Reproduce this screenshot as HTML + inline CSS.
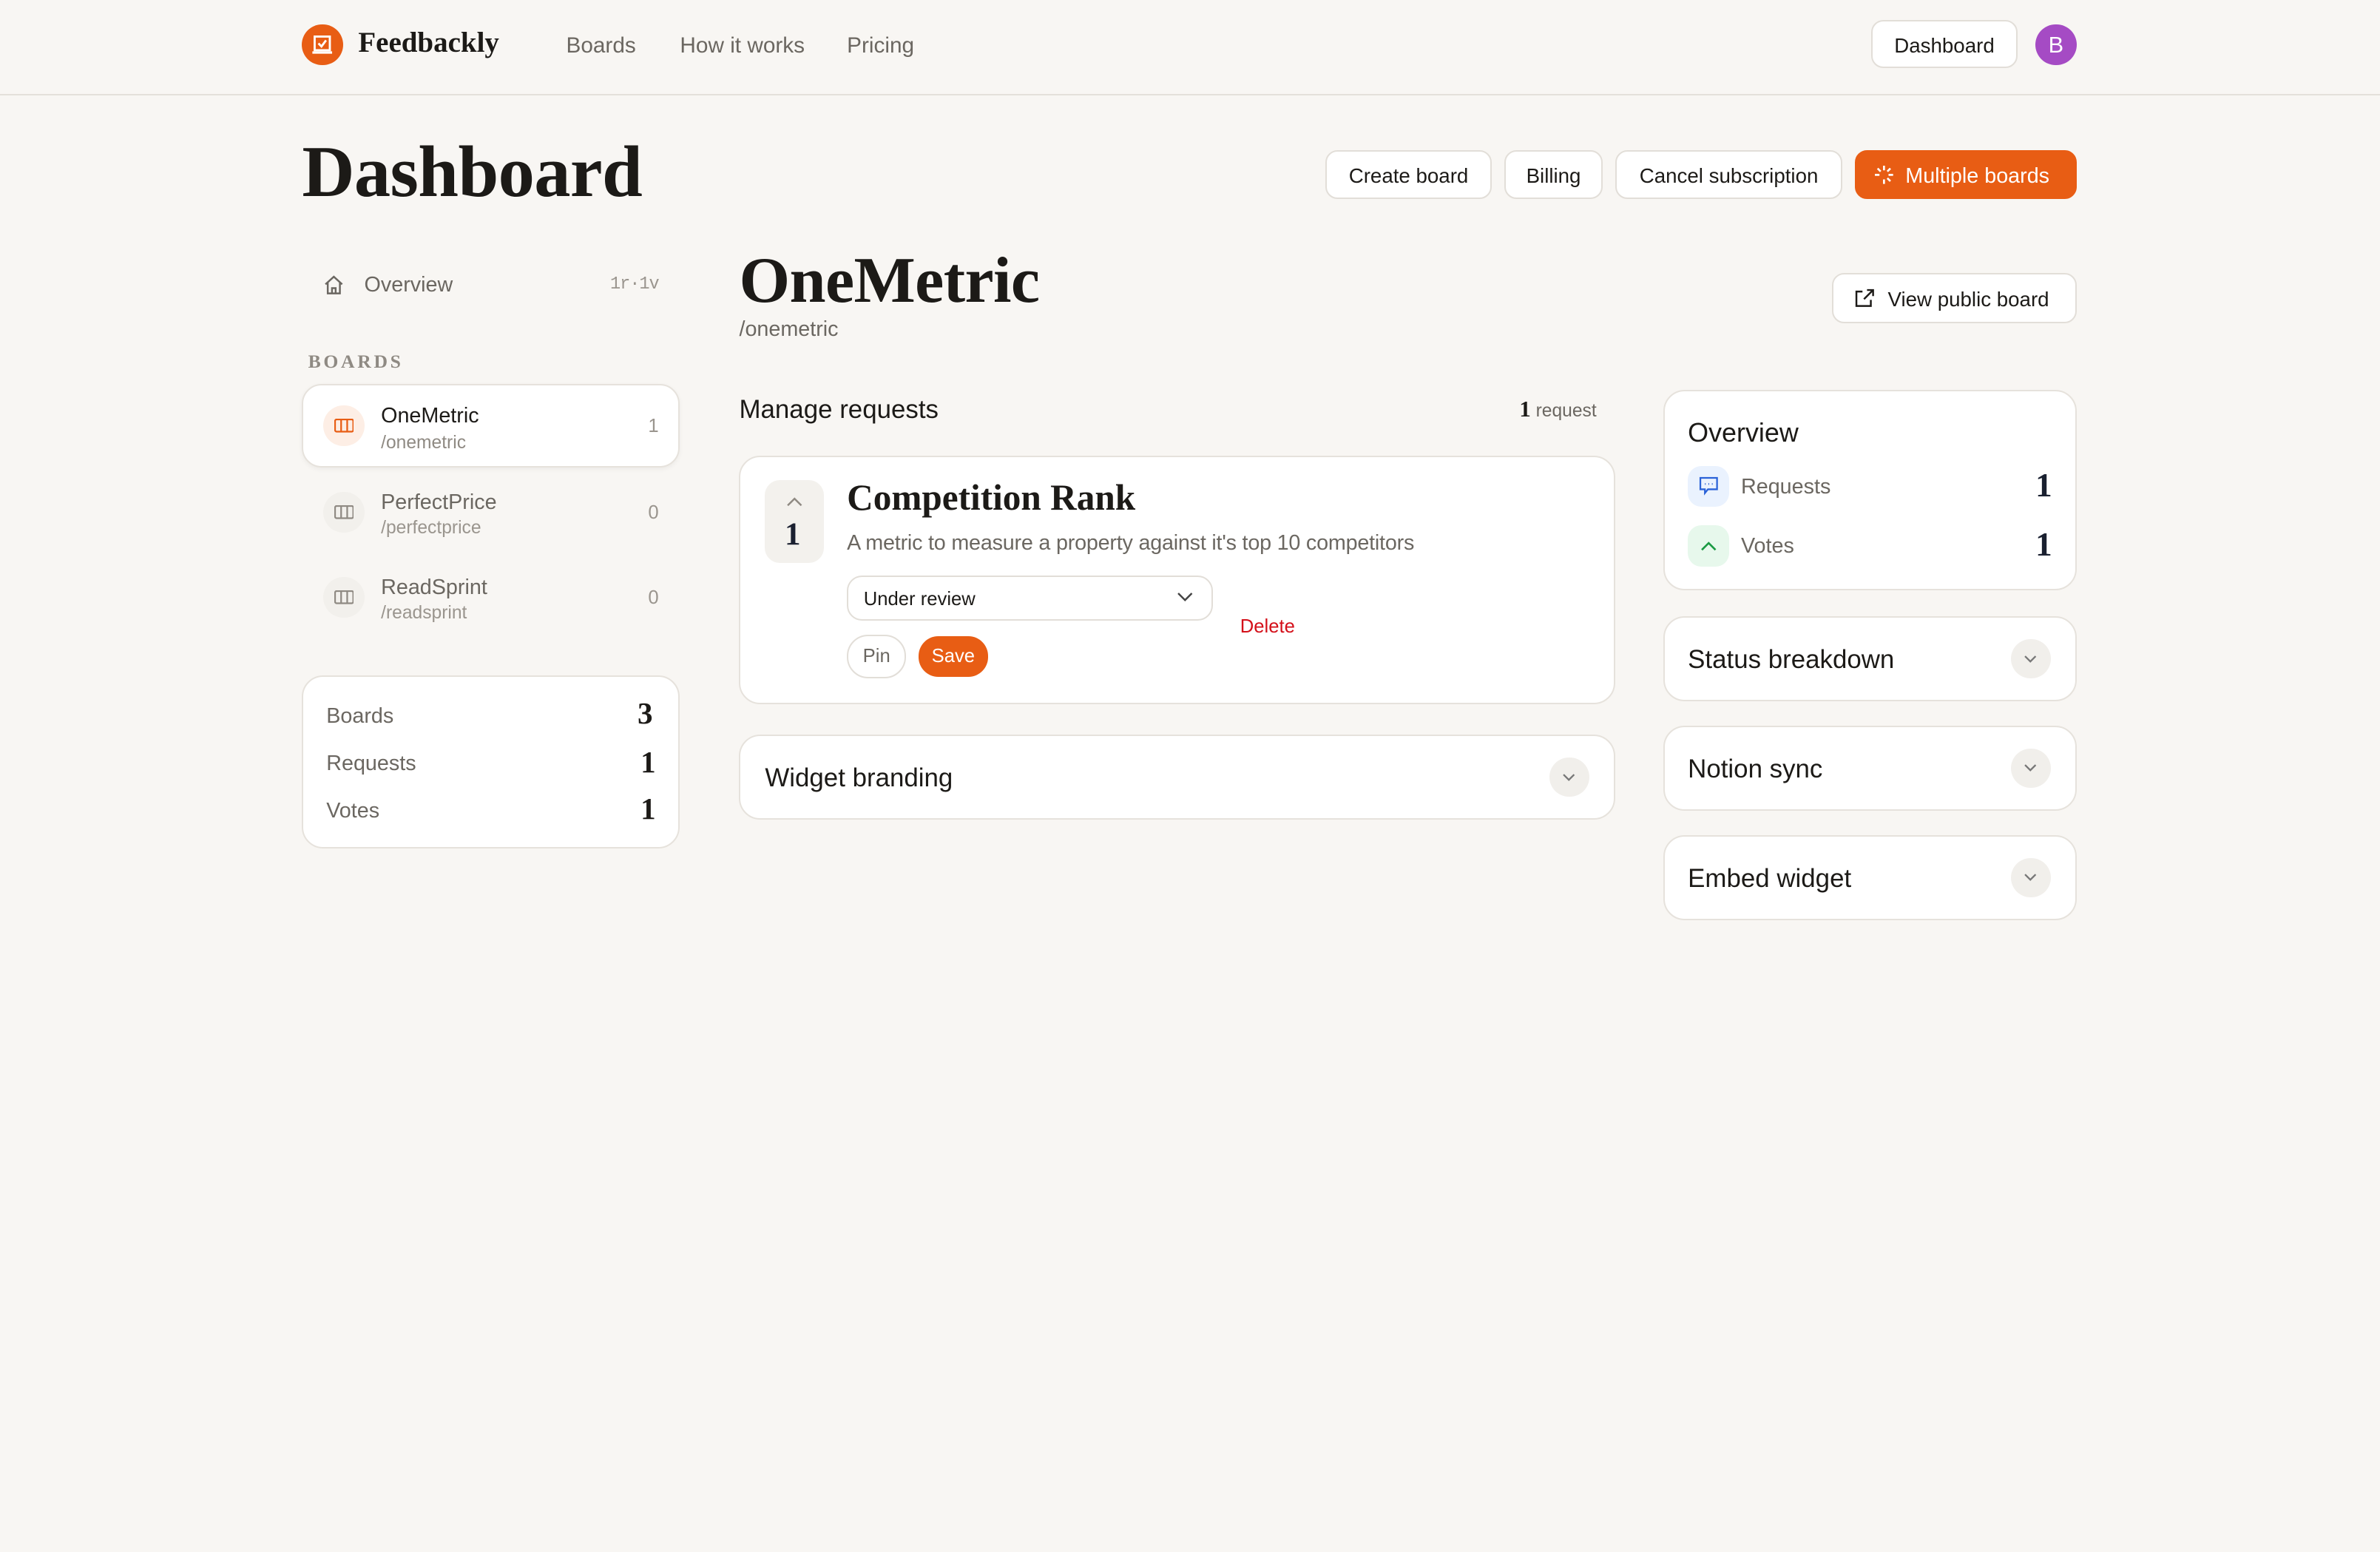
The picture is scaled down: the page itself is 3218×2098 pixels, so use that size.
<!DOCTYPE html>
<html><head><meta charset="utf-8"><style>
html,body{margin:0;padding:0;background:#f8f6f3;width:3218px;height:2098px;overflow:hidden}
#w{zoom:2.05230;width:1568px;height:1022px;position:relative;font-family:"Liberation Sans",sans-serif;color:#1c1a17}
.a{position:absolute}
.serif{font-family:"Liberation Serif",serif;font-weight:bold}
.card{position:absolute;background:#fff;border:1px solid #e6e2dc;border-radius:14px;box-sizing:border-box}
.btn{position:absolute;background:#fff;border:1px solid #e2ded8;border-radius:8px;box-sizing:border-box;font-size:13.5px;text-align:center;line-height:30px;color:#1c1a17}
.chev{position:absolute;width:26px;height:26px;border-radius:50%;background:#f1efeb}
.g{color:#6b6761}
</style></head><body><div id="w">
<div class="a" style="left:0;top:62px;width:1568px;height:1px;background:#e4e0da"></div>
<div class="a" style="left:199px;top:16px;width:27px;height:27px;border-radius:50%;background:#e85d14">
<svg width="27" height="27" viewBox="0 0 27 27"><rect x="8.5" y="8" width="10" height="9" fill="none" stroke="#fff" stroke-width="1.4"/><path d="M7 18.5h13" stroke="#fff" stroke-width="1.6"/><path d="M11 12.5l2 2 3-4" stroke="#fff" stroke-width="1.4" fill="none"/></svg></div>
<div class="a serif" style="left:236px;top:17px;font-size:19px">Feedbackly</div>
<div class="a g" style="left:373px;top:22px;font-size:14.5px">Boards</div>
<div class="a g" style="left:448px;top:22px;font-size:14.5px">How it works</div>
<div class="a g" style="left:558px;top:22px;font-size:14.5px">Pricing</div>
<div class="btn" style="left:1233px;top:13px;width:96px;height:32px;line-height:32px">Dashboard</div>
<div class="a" style="left:1341px;top:16px;width:27px;height:27px;border-radius:50%;background:#a54bc4;color:#fff;font-size:15px;text-align:center;line-height:27px">B</div>
<div class="a serif" style="left:199px;top:86px;font-size:48px;letter-spacing:-0.3px">Dashboard</div>
<div class="btn" style="left:873px;top:99px;width:110px;height:32px;line-height:32px">Create board</div>
<div class="btn" style="left:991px;top:99px;width:65px;height:32px;line-height:32px">Billing</div>
<div class="btn" style="left:1064px;top:99px;width:150px;height:32px;line-height:32px">Cancel subscription</div>
<div class="btn" style="left:1222px;top:99px;width:146px;height:32px;line-height:33px;background:#e85d14;border-color:#e85d14;color:#fff;font-size:14px">&nbsp;&nbsp;&nbsp;&nbsp;Multiple boards</div>
<svg class="a" style="left:1234px;top:108px" width="14" height="14" viewBox="0 0 14 14" fill="none" stroke="#fff" stroke-width="1.3"><path d="M7 1v3M7 10v3M1 7h3M10 7h3M2.8 2.8l2 2M9.2 9.2l2 2M11.2 2.8l-2 2"/></svg>
<svg class="a" style="left:213px;top:181px" width="14" height="14" viewBox="0 0 14 14" fill="none" stroke="#6b6761" stroke-width="1.2"><path d="M1.5 6.5L7 1.5l5.5 5M3 5.5V12.5h8V5.5M5.8 12.5V9h2.4v3.5"/></svg>
<div class="a g" style="left:240px;top:180px;font-size:14px">Overview</div>
<div class="a" style="left:402px;top:181px;font-size:11.5px;color:#9a958e;font-family:'Liberation Mono',monospace;letter-spacing:-0.5px">1r·1v</div>
<div class="a serif" style="left:203px;top:231px;font-size:12.5px;letter-spacing:1.8px;color:#8f8a83">BOARDS</div>
<div class="card" style="left:199px;top:253px;width:249px;height:55px;border-radius:13px;box-shadow:0 1px 3px rgba(0,0,0,.05)"></div>
<div class="a" style="left:213px;top:267px;width:27px;height:27px;border-radius:50%;background:#fdeee5"></div>
<div class="a" style="left:213px;top:324px;width:27px;height:27px;border-radius:50%;background:#f2f0ec"></div>
<div class="a" style="left:213px;top:380px;width:27px;height:27px;border-radius:50%;background:#f2f0ec"></div>
<svg class="a" style="left:220px;top:276px" width="13" height="9" viewBox="0 0 13 9" fill="none" stroke="#e85d14" stroke-width="1.1"><rect x=".5" y=".5" width="12" height="8" rx="1"/><path d="M4.5 .5v8M8.5 .5v8"/></svg>
<svg class="a" style="left:220px;top:333px" width="13" height="9" viewBox="0 0 13 9" fill="none" stroke="#8f8a83" stroke-width="1.1"><rect x=".5" y=".5" width="12" height="8" rx="1"/><path d="M4.5 .5v8M8.5 .5v8"/></svg>
<svg class="a" style="left:220px;top:389px" width="13" height="9" viewBox="0 0 13 9" fill="none" stroke="#8f8a83" stroke-width="1.1"><rect x=".5" y=".5" width="12" height="8" rx="1"/><path d="M4.5 .5v8M8.5 .5v8"/></svg>
<div class="a" style="left:251px;top:266px;font-size:14px">OneMetric</div>
<div class="a" style="left:251px;top:285px;font-size:12px;color:#8f8a83">/onemetric</div>
<div class="a" style="left:427px;top:274px;font-size:12.5px;color:#9a958e">1</div>
<div class="a g" style="left:251px;top:323px;font-size:14px">PerfectPrice</div>
<div class="a" style="left:251px;top:341px;font-size:12px;color:#9a958e">/perfectprice</div>
<div class="a" style="left:427px;top:331px;font-size:12.5px;color:#9a958e">0</div>
<div class="a g" style="left:251px;top:379px;font-size:14px">ReadSprint</div>
<div class="a" style="left:251px;top:397px;font-size:12px;color:#9a958e">/readsprint</div>
<div class="a" style="left:427px;top:387px;font-size:12.5px;color:#9a958e">0</div>
<div class="card" style="left:199px;top:445px;width:249px;height:114px"></div>
<div class="a g" style="left:215px;top:464px;font-size:14px">Boards</div>
<div class="a g" style="left:215px;top:495px;font-size:14px">Requests</div>
<div class="a g" style="left:215px;top:526px;font-size:14px">Votes</div>
<div class="a serif" style="left:420px;top:458px;font-size:20px">3</div>
<div class="a serif" style="left:422px;top:490px;font-size:20px">1</div>
<div class="a serif" style="left:422px;top:521px;font-size:20px">1</div>
<div class="a serif" style="left:487px;top:160px;font-size:43px;letter-spacing:-0.3px">OneMetric</div>
<div class="a g" style="left:487px;top:209px;font-size:14px">/onemetric</div>
<div class="btn" style="left:1207px;top:180px;width:161px;height:33px;line-height:33px">&nbsp;&nbsp;&nbsp;&nbsp;&nbsp;View public board</div>
<svg class="a" style="left:1222px;top:190px" width="13" height="13" viewBox="0 0 13 13" fill="none" stroke="#1c1a17" stroke-width="1.2"><path d="M10.5 7.5v4h-9.5v-9.5h4M8 1h4v4M12 1L6 7"/></svg>
<div class="a" style="left:487px;top:260px;font-size:17px">Manage requests</div>
<div class="a" style="left:1001px;top:261px;font-size:12px;color:#6b6761"><span class="serif" style="font-size:15px;color:#1c1a17">1</span> request</div>
<div class="card" style="left:487px;top:300px;width:577px;height:164px"></div>
<div class="a" style="left:504px;top:316px;width:39px;height:55px;border-radius:10px;background:#f3f1ed"></div>
<svg class="a" style="left:518px;top:327px" width="11" height="7" viewBox="0 0 11 7" fill="none" stroke="#8f8a83" stroke-width="1.2"><path d="M1 6l4.5-4.5L10 6"/></svg>
<div class="a serif" style="left:517px;top:340px;font-size:21px;color:#1a2030">1</div>
<div class="a serif" style="left:558px;top:314px;font-size:24px">Competition Rank</div>
<div class="a g" style="left:558px;top:350px;font-size:14px;letter-spacing:-0.1px">A metric to measure a property against it's top 10 competitors</div>
<div class="a" style="left:558px;top:379px;width:241px;height:30px;border:1px solid #e2ded8;border-radius:10px;box-sizing:border-box;background:#fff"></div>
<div class="a" style="left:569px;top:388px;font-size:12.5px">Under review</div>
<svg class="a" style="left:775px;top:390px" width="11" height="7" viewBox="0 0 11 7" fill="none" stroke="#444" stroke-width="1.2"><path d="M1 1l4.5 4.5L10 1"/></svg>
<div class="a" style="left:817px;top:406px;font-size:12.5px;color:#d4101a">Delete</div>
<div class="a" style="left:558px;top:418px;width:39px;height:29px;border:1px solid #e2ded8;border-radius:14px;box-sizing:border-box;background:#fff;text-align:center;line-height:27px;font-size:12.5px;color:#6b6761">Pin</div>
<div class="a" style="left:605px;top:419px;width:46px;height:27px;border-radius:13px;background:#e85d14;text-align:center;line-height:27px;font-size:12.5px;color:#fff">Save</div>
<div class="card" style="left:487px;top:484px;width:577px;height:56px"></div>
<div class="a" style="left:504px;top:503px;font-size:17px">Widget branding</div>
<div class="chev" style="left:1021px;top:499px"></div>
<div class="card" style="left:1096px;top:257px;width:272px;height:132px"></div>
<div class="a" style="left:1112px;top:275px;font-size:17.5px">Overview</div>
<div class="a" style="left:1112px;top:307px;width:27px;height:27px;border-radius:9px;background:#eaf2fe"></div>
<svg class="a" style="left:1119px;top:314px" width="13" height="13" viewBox="0 0 13 13" fill="none" stroke="#2a62d8" stroke-width="1.1"><path d="M1 1h11v7.5H6l-2 2.5V8.5H1z"/><path d="M4 5h.5M6.3 5h.5M8.6 5h.5"/></svg>
<div class="a" style="left:1112px;top:346px;width:27px;height:27px;border-radius:9px;background:#e7f8ec"></div>
<svg class="a" style="left:1120px;top:356px" width="11" height="7" viewBox="0 0 11 7" fill="none" stroke="#1a9a43" stroke-width="1.3"><path d="M1 6l4.5-4.5L10 6"/></svg>
<div class="a g" style="left:1147px;top:313px;font-size:14px">Requests</div>
<div class="a g" style="left:1147px;top:352px;font-size:14px">Votes</div>
<div class="a serif" style="left:1341px;top:307px;font-size:22px;color:#1a2030">1</div>
<div class="a serif" style="left:1341px;top:346px;font-size:22px;color:#1a2030">1</div>
<div class="card" style="left:1096px;top:406px;width:272px;height:56px"></div>
<div class="a" style="left:1112px;top:425px;font-size:17px">Status breakdown</div>
<div class="chev" style="left:1325px;top:421px"></div>
<div class="card" style="left:1096px;top:478px;width:272px;height:56px"></div>
<div class="a" style="left:1112px;top:497px;font-size:17px">Notion sync</div>
<div class="chev" style="left:1325px;top:493px"></div>
<div class="card" style="left:1096px;top:550px;width:272px;height:56px"></div>
<div class="a" style="left:1112px;top:569px;font-size:17px">Embed widget</div>
<div class="chev" style="left:1325px;top:565px"></div>
<svg class="a" style="left:1029px;top:509px" width="9" height="6" viewBox="0 0 9 6" fill="none" stroke="#777" stroke-width="1.1"><path d="M1 1l3.5 3.5L8 1"/></svg>
<svg class="a" style="left:1333px;top:431px" width="9" height="6" viewBox="0 0 9 6" fill="none" stroke="#777" stroke-width="1.1"><path d="M1 1l3.5 3.5L8 1"/></svg>
<svg class="a" style="left:1333px;top:503px" width="9" height="6" viewBox="0 0 9 6" fill="none" stroke="#777" stroke-width="1.1"><path d="M1 1l3.5 3.5L8 1"/></svg>
<svg class="a" style="left:1333px;top:575px" width="9" height="6" viewBox="0 0 9 6" fill="none" stroke="#777" stroke-width="1.1"><path d="M1 1l3.5 3.5L8 1"/></svg>
</div></body></html>
